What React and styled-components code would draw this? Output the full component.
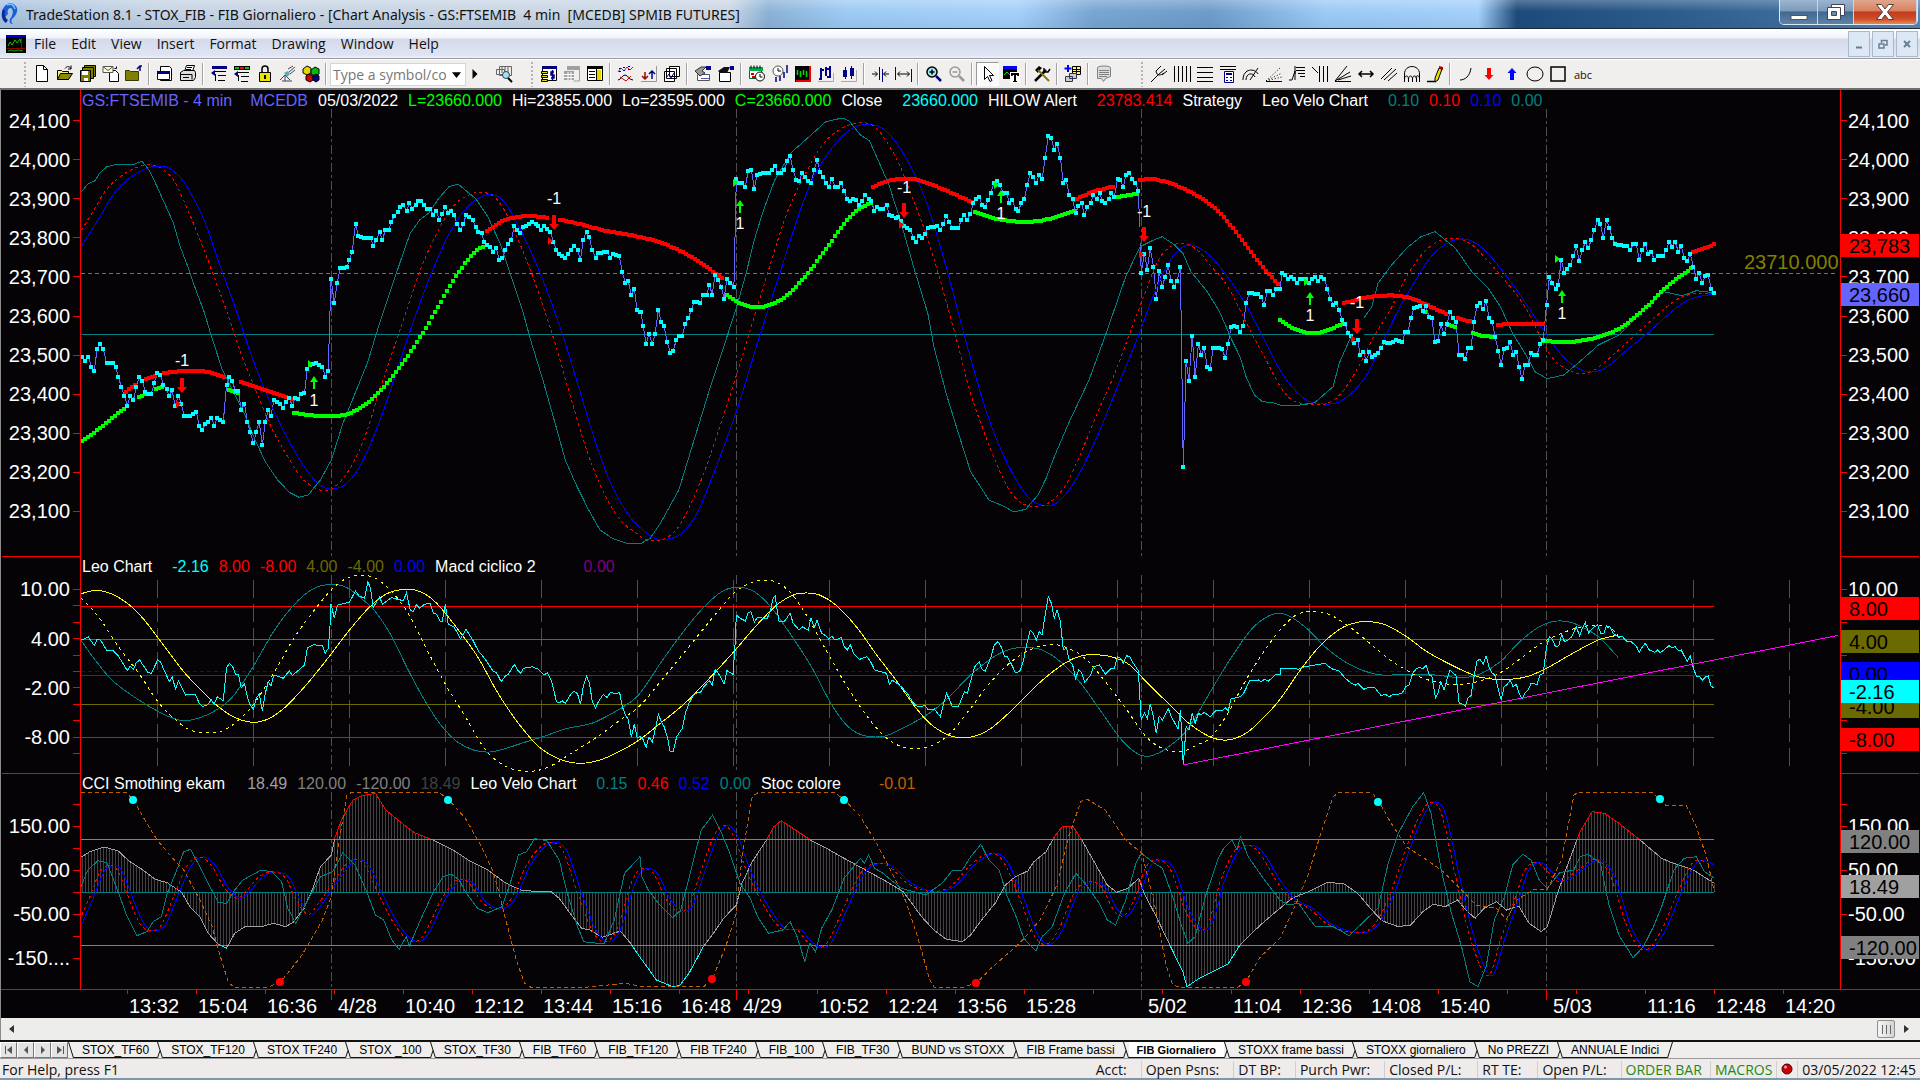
import React from "react";
import styled, { createGlobalStyle, css } from "styled-components";

const UI = '"Open Sans", "Noto Sans", sans-serif';
const ARIAL = '"Liberation Sans", Arial, sans-serif';

const GlobalStyle = createGlobalStyle`
  * { box-sizing: border-box; }
  html, body { margin: 0; padding: 0; background: #efebea; }
  button, input { font: inherit; color: inherit; margin: 0; padding: 0; border: 0; background: none; }
`;

const Page = styled.div`
  display: flex;
  flex-direction: column;
  min-height: 100vh;
  overflow: hidden;
  background: #efebea;
  font-family: ${UI};
  font-size: 14px;
  color: #111;
`;

/* ---------- title bar ---------- */

const TitleBar = styled.header`
  display: flex;
  align-items: flex-start;
  height: 29px;
  border-bottom: 1px solid #1b2a3c;
  background:
    linear-gradient(180deg, rgba(255,255,255,.25), rgba(255,255,255,0) 40%, rgba(20,50,90,.08)),
    linear-gradient(90deg, #aac3df 0%, #c6d4e4 8%, #ccd8e6 38%, #8db3d6 40%, #9ecbf4 44%, #a6d1fb 53%, #79a6d2 57%, #6f9ccb 63%, #9ccbf6 69%, #a4d0fa 77%, #1e4b7b 79%, #2b5a8a 86%, #3c6c9c 93%, #5a87b3 100%);
`;

const TitleText = styled.h1`
  flex: 1;
  margin: 0;
  padding: 5px 0 0 6px;
  font-family: "Noto Sans", "Open Sans", sans-serif;
  font-size: 14px;
  line-height: 20px;
  font-weight: 400;
  white-space: pre;
`;

const Logo = styled.svg`
  width: 20px;
  height: 26px;
`;

const WindowButtons = styled.div`
  display: flex;
  height: 25px;
  margin-right: 2px;
  border: 1px solid #dbe8f4;
  border-top: 0;
  border-radius: 0 0 5px 5px;
  overflow: hidden;
`;

const WindowButton = styled.button`
  display: grid;
  place-items: center;
  width: ${(p) => p.$w}px;
  border-right: 1px solid #c7d6e6;
  background: ${(p) =>
    p.$close
      ? "linear-gradient(#e0a58c 0, #d9815f 45%, #c03a1c 50%, #d0502c 80%, #e68b54)"
      : "linear-gradient(#9db5cf 0, #7d9bbb 45%, #41688f 50%, #5d83a8)"};
`;

/* ---------- menu bar ---------- */

const MenuBar = styled.nav`
  display: flex;
  align-items: center;
  height: 30px;
  padding: 0 2px 0 6px;
  border-bottom: 1px solid #9a9aa2;
  background: linear-gradient(#ffffff 0, #f2f4fa 30%, #d5dbeb 36%, #dfe4f4 90%, #f0f2f8);
`;

const MenuIcon = styled.svg`
  width: 20px;
  height: 18px;
`;

const MenuItem = styled.button`
  padding: 0 7px 0 8px;
  line-height: 28px;
  font-size: 14px;
`;

const MdiButtons = styled.div`
  display: flex;
  gap: 2px;
  margin-left: auto;
`;

const MdiButton = styled.button`
  display: grid;
  place-items: center;
  width: 22px;
  height: 26px;
  border: 1px solid #a9b9c9;
  background: #dce9f5;
`;

/* ---------- toolbar ---------- */

const ToolBar = styled.div`
  display: flex;
  align-items: center;
  height: 31px;
  padding-left: 24px;
  border-bottom: 2px solid #6f6f6f;
  border-top: 1px solid #fff;
  background: #f0efee;
`;

const Grip = styled.span`
  width: 2px;
  height: 25px;
  margin: 0 4px 0 ${(p) => p.$before || 0}px;
  background: repeating-linear-gradient(#b4b4b4 0 2px, transparent 2px 4px);
`;

const Divider = styled.span`
  width: 2px;
  height: 22px;
  margin: 0 3px;
  background: #a3a3a3;
  border-right: 1px solid #fff;
`;

const Tool = styled.button`
  display: grid;
  place-items: center;
  width: ${(p) => (p.$text ? 28 : 23)}px;
  height: 24px;
  font-family: ${UI};
  font-size: 11px;
  ${(p) =>
    p.$pressed &&
    css`
      background: #fbfbfb;
      border: 1px solid #9a9a9a;
      border-right-color: #fff;
      border-bottom-color: #fff;
    `}
`;

const Glyph = styled.svg`
  width: 18px;
  height: 18px;
  overflow: visible;
`;

const SymbolBox = styled.div`
  display: flex;
  align-items: center;
  width: 136px;
  height: 23px;
  border: 1px solid #d5d5d5;
  background: #fff;
`;

const SymbolInput = styled.input`
  flex: 1;
  min-width: 0;
  padding-left: 2px;
  font-size: 14px;
  outline: 0;
  &::placeholder { color: #777; opacity: 1; }
`;

const Arrow = styled.button`
  display: grid;
  place-items: center;
  width: ${(p) => p.$w}px;
  height: 22px;
  margin-right: ${(p) => p.$after || 0}px;
`;

/* ---------- chart ---------- */

const Chart = styled.main`
  display: flex;
  flex-direction: column;
  flex: 1;
  padding: 0 1px 0 1px;
  border-left: 1px solid #8b8b8b;
  background: #050306;
  font-family: ${ARIAL};
`;

const Pane = styled.section`
  position: relative;
  display: flex;
  flex: ${(p) => p.$grow} 0 0;
`;

const Axis = styled.div`
  display: flex;
  flex-direction: column;
  width: 79px;
  padding: ${(p) => p.$pad};
  color: #fff;
  font-size: 20px;
  border: 0 solid #f00;
  border-bottom-width: ${(p) => (p.$last ? 0 : 1)}px;
  ${(p) => (p.$right ? "border-left-width: 1px;" : "border-right-width: 1px;")}
`;

const Mark = styled.div`
  display: flex;
  flex: 1 0 0;
  min-height: 0;
  align-items: center;
  justify-content: flex-end;
  gap: ${(p) => (p.$right ? 1 : 3)}px;
  flex-direction: ${(p) => (p.$right ? "row-reverse" : "row")};
  line-height: 0;
  white-space: nowrap;
  &::after {
    content: "";
    width: ${(p) => (p.$right ? 6 : 7)}px;
    height: 1px;
    background: #f00;
  }
`;

const Badge = styled.div`
  position: absolute;
  right: 0;
  top: ${(p) => p.$top}px;
  width: 78px;
  height: 23px;
  padding-left: 8px;
  background: ${(p) => p.$bg};
  color: #000;
  font-size: 20px;
  line-height: 24px;
`;

const Plot = styled.div`
  position: relative;
  flex: 1;
  min-width: 0;
`;

const Canvas = styled.svg`
  display: block;
  position: absolute;
  inset: 0;
  width: 100%;
  height: 100%;
  font-family: ${ARIAL};
`;

const Legend = styled.div`
  position: relative;
  display: flex;
  gap: 10px;
  padding-left: 1px;
  font-size: 16px;
  line-height: ${(p) => (p.$tall ? 22 : 20)}px;
  white-space: nowrap;
`;

const Name = styled.span`
  color: #fff;
  margin-right: ${(p) => p.$after ?? 10}px;
`;

const Value = styled.span`
  color: ${(p) => p.$c};
  margin-right: ${(p) => p.$after || 0}px;
`;

const TimeAxis = styled.div`
  position: relative;
  display: grid;
  height: 29px;
  margin: 0 -1px;
  padding: 4px 0 0 128px;
  border-top: 1px solid #f00;
  background: #050306;
  color: #fff;
  font-size: 20px;
  line-height: 24px;
  white-space: nowrap;
`;

const TimeTicks = styled.svg`
  position: absolute;
  left: 0;
  top: 0;
  width: 100%;
  height: 11px;
`;

/* ---------- bottom bars ---------- */

const ScrollBar = styled.div`
  display: flex;
  align-items: center;
  height: 22px;
  padding: 0 3px;
  border-left: 1px solid #8b8b8b;
  background: #ededec;
`;

const Track = styled.div`
  flex: 1;
`;

const Thumb = styled.button`
  width: 18px;
  height: 18px;
  border: 1px solid #8e8e8e;
  border-radius: 2px;
  background:
    repeating-linear-gradient(90deg, #666 0 1px, transparent 1px 4px) center / 9px 9px no-repeat,
    linear-gradient(90deg, #f6f6f6, #d4d4d4);
`;

const TabBar = styled.div`
  display: flex;
  height: 19px;
  border-top: 2px solid #111;
  border-bottom: 1px solid #9a9a9a;
  background: #efeeed;
  font-family: ${ARIAL};
  font-size: 12px;
`;

const TabNav = styled.button`
  display: grid;
  place-items: center;
  width: 17px;
  height: 16px;
  border: 1px solid #fff;
  border-right-color: #777;
  border-bottom-color: #777;
  background: #e4e4e4;
`;

const Tab = styled.button`
  height: 16px;
  padding: 0 8px;
  border-bottom: 1px solid #111;
  background: ${(p) => (p.$on ? "#fff" : "#efeeed")};
  font-weight: ${(p) => (p.$on ? 700 : 400)};
  font-size: ${(p) => (p.$on ? 11 : 12)}px;
  line-height: 14px;
  white-space: pre;
  color: #000;
`;

const Slant = styled.svg`
  width: 6px;
  height: 16px;
  flex: none;
`;

const StatusBar = styled.footer`
  display: flex;
  align-items: center;
  height: 21px;
  padding: 2px 4px 0 2px;
  border-bottom: 2px solid #7d97ad;
  background: #efebea;
  font-size: 14px;
  line-height: 17px;
  white-space: nowrap;
`;

const Cell = styled.span`
  padding: 0 ${(p) => p.$r ?? 14}px 0 4px;
  border-left: 1px solid ${(p) => (p.$first ? "transparent" : "#d2cecd")};
  color: ${(p) => p.$c || "#111"};
`;

const Spacer = styled.span`
  flex: 1;
`;

/* ---------- icons ---------- */

const S = (p) => <path fill="none" stroke="#000" strokeWidth="1" {...p} />;
const F = (p) => <path fill="#000" {...p} />;
const note = "#808080";

const ICONS = {
  New: <><F fill="#fff" stroke="#000" d="M3.5.5h7l4 4v12h-11z" /><S d="M10.5.5v4h4" /></>,
  Open: <><F fill="#f4ef7a" stroke="#000" d="M1.5 5.5h4l1 1h6v8h-11z" /><F fill="#8a8a00" stroke="#000" d="M1.5 14.5l3-6h12l-4 6z" /><S d="M9 3.500c2-3 5-2 6 0m0-3v3.500h-3" /></>,
  "Save all": <><F fill="#808000" stroke="#000" d="M5.500.5h11v11h-11z" /><F fill="#808000" stroke="#000" d="M3.500 2.500h11v11h-11z" /><F fill="#808000" stroke="#000" d="M1.500 5.500h10v11h-10z" /><F fill="#fff" d="M3 6h6v4H3zM5 13h4v3H5z" /></>,
  Mail: <><F fill="#fff" stroke="#000" d="M7.500 5.500h6l3 3v8h-9z" /><F fill="#fffbd0" stroke="#555" d="M1 1.500h10v6H1z" /><S stroke="#555" d="M1 1.500l5 4 5-4" /><S d="M12.500 3.500h2v-2" /></>,
  "Close folder": <><F fill="#808000" stroke="#3a3a00" d="M.5 5.500h4l1 1h8v9H.5z" /><S stroke="#000080" strokeWidth="1.500" d="M15 6V1m-3 3l3-3h2" /></>,
  Window: <><F fill="#fff" stroke="#000" d="M4.500 1.500h9l2 2v12h-11z" /><F fill="#fff" stroke="#000080" d="M1.500 6.500h12v8h-12z" /><F fill="#000080" d="M1 6h13v3H1z" /></>,
  Print: <><F fill="#fff" stroke="#000" d="M5.500 6.500l2-6h8l-2 6z" /><F fill="#ddd" stroke="#000" d="M1.500 7.500l3-2h11l1 2v5l-2 3h-13z" /><S d="M1 9.500h12v5M4 12.500h6M8 2.500h5M7 4.500h5" /></>,
  Levels: <><F fill="#000080" d="M2 1h15v3H2z" /><S d="M5 6.500h11M8 10.500h8M8 15.500h7M5.500 9v7" /><F fill="#000080" d="M1 8l4-3v6z" /></>,
  "Color levels": <><F d="M1 1h16v4H1z" /><F fill="#0c0" d="M2 2h4v2H2zM12 2h4v2h-4z" /><F fill="#f00" d="M7 2h4v2H7z" /><S d="M5 7.500h11M8 11.500h8M8 16.500h7M5.500 10v6" /><F fill="#000080" d="M1 9l4-3v6z" /></>,
  Lock: <><S strokeWidth="1.500" d="M6 7V4c0-4 6-4 6 0v3" /><F fill="#e8e300" stroke="#000" d="M3.500 7.500h11v9h-11z" /><F d="M8 10h2v4H8z" /></>,
  Satellite: <><S stroke="#445" d="M1 15l5-5 5 5M6 10v6M9 4l5-3M10 7l6-5M11 9l5-4M3 16h10" /><F fill="#5ab" d="M5 8l4-2 2 3-3 3z" /></>,
  Cubes: <><F fill="#e5d800" stroke="#000" d="M1 4l4-3 4 2v5l-4 2-4-2z" /><F fill="#0b1" stroke="#000" d="M9 5l4-3 4 2v5l-4 2-4-2z" /><F fill="#c00" stroke="#000" d="M4 11l3-2 4 2v4l-3 2-4-2z" /><F fill="#008" stroke="#000" d="M11 11l3-2 3 2v4l-3 2-3-2z" /></>,
  Find: <><F fill="#eee" stroke="#666" d="M1.500 4.500h8v5h-8zM4.500 1.500h12v9h-12z" /><S stroke="#666" d="M7 2v6m3-6v6m3-6v6" /><circle cx="11" cy="10" r="3.500" fill="#9fe3ee" stroke="#345" /><S strokeWidth="2" d="M13 13l4 4" /></>,
  "Money sheet": <><F fill="#fff" stroke="#000" d="M2.500 2.500h14v13h-14z" /><F fill="#000080" d="M2 1h15v3H2z" /><F fill="#e5d800" stroke="#000" d="M1.500 6.500h6v2h-6zM1.500 10.500h6v2h-6zM1.500 14.500h6v2h-6z" /><S stroke="#000080" strokeWidth="1.500" d="M14 7h-3v3h3v3h-3m1.500-8v10" /></>,
  "Gray sheet": <><F fill="#a0a0a0" d="M4 1h13v4H4zM1 6h10v9H1z" /><S stroke="#fff" d="M5 7v8m3-8v8M1 9.500h10M1 12.500h10" /><S stroke="#a0a0a0" d="M16.500 5v11h-6" /></>,
  Sheet: <><F fill="#fff" stroke="#000" d="M1.500 2.500h15v13h-15z" /><F fill="#000" d="M1 1h16v3H1z" /><F fill="#e5d800" d="M11 5h4v10h-4z" /><S d="M3 6.500h6M3 9.500h6M3 12.500h6M10.500 4v12" /></>,
  Indicator: <><S stroke="#b22" d="M1 7l3-4 3 3 3-4 3 3 3-3" /><S stroke="#00a" strokeWidth="2" strokeDasharray="1 2" d="M3 3v5m4-6v4m5-5v5" /><S d="M1 15c3 0 4-5 7-5s4 5 8 5" /><S stroke="#c00" d="M3 12l6 4 5-5" /></>,
  "Sort arrows": <><S stroke="#900" strokeWidth="1.500" d="M5 7v7m-3-3l3 3 3-3" /><S stroke="#008" strokeWidth="1.500" d="M12 14V6m-3 3l3-3 3 3" /><S stroke="#999" d="M1 16.500h15.500V1" /></>,
  Layers: <><F fill="#fff" stroke="#000" d="M6.500 1.500h10v10h-10zM3.500 3.500h10v10h-10zM1.500 6.500h10v10h-10z" /><S stroke="#008" d="M3 13l3-4 2 4 3-5" /></>,
  "Format hand": <><F fill="#fff" stroke="#555" d="M3.500 9.500h12v6h-12z" /><F fill="#999" stroke="#333" d="M1 6l6-4h5l-4 4 3 2-5 3z" /><F fill="#008" d="M12 1h5v4h-5z" /><S stroke="#55a" d="M7 13.500h8" /></>,
  "Format hand dark": <><F fill="#fff" stroke="#000" d="M2.500 7.500h11v9h-11z" /><F fill="#111" d="M1 6l6-4h6l-3 6H3z" /><F fill="#008" d="M13 1h4v4h-4z" /></>,
  "Session calendar": <><F fill="#fff" stroke="#063" d="M1.500 3.500h12v10h-12z" /><F fill="#0a4" d="M1 2h14v4H1z" /><S d="M3 .5v3m3-3v3m3-3v3m3-3v3" /><F fill="#c00" d="M3 8h3v2H3zM4 11h3v2H4z" /><circle cx="12" cy="11.500" r="4.500" fill="#fff" stroke="#000" /><S d="M12 9v3h2.500" /></>,
  "Bar interval": <><circle cx="7" cy="6" r="5" fill="#fff" stroke="#555" /><S d="M7 3v3h3" /><S stroke="#008" strokeWidth="1.500" d="M5 12v5m4-6v5m4-9v6m3-13v8" /></>,
  "Bar chart": <><F fill="#000" d="M1 1h16v16H1z" /><S stroke="#e00" strokeWidth="2" d="M16 1v15H2" /><S stroke="#0d0" strokeWidth="1.500" d="M3.500 5v5m3-4v6m3-7v5m3-4v6" /></>,
  "OHLC bars": <><S stroke="#008" strokeWidth="2" d="M4 3v12M2 14h2m0-9h3M9 2v9m0-7h3m1-3v12m-3-1h3" /><S stroke="#aaa" d="M1 16.500h15.500V8" /></>,
  Candles: <><S stroke="#008" d="M5.500 2v12M11.500 1v13" /><F fill="#008" d="M3 5h4v7H3zM10 3h4v8h-4z" /><S stroke="#aaa" d="M1 16.500h15.500V5" /></>,
  "Tighten bars": <><S stroke="#008" d="M8.500 2v13M11.500 4v13" /><S d="M1 9h5m-2-2.500L6.500 9 4 11.500M18 9h-5m2-2.500L12.500 9l2.500 2.500" /></>,
  "Widen bars": <><S stroke="#008" d="M1.500 2v13M17.500 4v13" /><S d="M4 9h11M6 6.500L3.500 9 6 11.500M13 6.500L15.500 9 13 11.500" /></>,
  "Zoom in": <><circle cx="7" cy="7" r="5" fill="#9fe9f2" stroke="#000" strokeWidth="1.500" /><S strokeWidth="1.500" d="M4.500 7h5M7 4.500v5" /><S stroke="#008" strokeWidth="2.500" d="M11 11l5 5" /></>,
  "Zoom out": <><circle cx="7" cy="7" r="5" fill="none" stroke="#999" strokeWidth="1.500" /><S stroke="#999" strokeWidth="1.500" d="M4.500 7h5" /><S stroke="#999" strokeWidth="2.500" d="M11 11l5 5" /></>,
  Pointer: <F fill="#fff" stroke="#000" d="M5.500 1.500v13l3-3 2.500 5 2-1-2.500-5h4z" />,
  "Text tool": <><F fill="#000" d="M1 1h14v13H1z" /><F fill="#00f" d="M1 1h14v3H1z" /><S stroke="#0d0" d="M2 10l3-3 3 3 3-2" /><F fill="#fff" d="M8 7h10v11H8z" /><F d="M9 8h8v3h-1.500l-.5-1h-1v6h1v1h-4v-1h1v-6h-1l-.5 1H9z" /></>,
  Tools: <><S strokeWidth="2.500" d="M2 16L13 5" /><F d="M2 5l4-4 3 2-3 3-1 2z" /><S stroke="#870" strokeWidth="2" d="M5 5l11 11" /><S stroke="#000" strokeWidth="1.500" d="M11 3v4h4l2-3" /></>,
  "Add table": <><S stroke="#00f" strokeWidth="2" d="M4 0v7M.5 3.500h7" /><F fill="#ffef80" stroke="#000" d="M8.500 1.500h8v8h-8z" /><S d="M9 4.500h7M9 6.500h7M12.500 2v7" /><F fill="#ccc" stroke="#335" d="M5.500 8.500h7v5h-7zM1.500 11.500h7v5h-7z" /></>,
  Notes: <><F fill="#ddd" stroke={note} d="M2.500 2.500c2-2 11-2 13 0v9l-5 2-2 3-2-3h-4z" /><S stroke={note} d="M4 5.500h10M4 7.500h10M4 9.500h10M4 11.500h8" /></>,
  Pitchfork: <S d="M1 17l8-8M6 6c1 6 5 4 8 2M6 6l5-5M9 9l6-5M12 10l5-4" />,
  "Vertical lines": <S d="M1.500 1v16M5.500 1v16M9.500 1v16M13.500 1v16M17.500 1v16" />,
  "Horizontal lines": <S d="M1 2.500h16M1 7.500h16M1 12.500h16M1 16.500h16" />,
  Calculator: <><S d="M1 1.500h16M1 4.500h16" /><F fill="#fff" stroke="#008" d="M5.500 6.500h9v11h-9z" /><F fill="#008" d="M7 8h6v2H7zM7 12h2v1H7zM11 12h2v1h-2zM7 15h2v1H7zM11 15h2v1h-2z" /></>,
  "Speed arcs": <S d="M1 15c0-12 12-12 15-6M4 15c0-7 7-8 9-3M8 15L16 3" />,
  "Dotted fan": <><S strokeDasharray="1 2" d="M1 16L16 2M1 16L17 8M1 16L17 12" /><S d="M1 16.500h16" /></>,
  "Step levels": <S d="M1 15h3l3-9v9M8 2.500h9M8 5.500h9M10 8.500h7M12 11.500h5M7 1v8" />,
  "Time lines": <S d="M1 2l6 6M8.500 1v16M12.500 1v16M16.500 1v16" />,
  Fan: <S d="M1 16.500h16M1 16L13 1M1 16l15-9M4 15l13-4" />,
  "Horizontal arrow": <S strokeWidth="1.500" d="M2 9h14M5 6L2 9l3 3M13 6l3 3-3 3" />,
  Channel: <S d="M1 14L12 3M4 15L16 4M8 16l9-8" />,
  Cycles: <S d="M1.500 17V9c0-10 15-10 15 0v8M1.500 14c0-4 4-4 4 0v3M5.500 14c0-4 4-4 4 0v3M9.500 14c0-4 4-4 4 0v3M13 13c0-3 3-3 3.500 0" />,
  Pencil: <><S strokeWidth="1.500" d="M1 16.500h9" /><F fill="#e8e300" stroke="#000" d="M9 13l4-10 3 1-4 11-3 2z" /><F fill="#a00" d="M13 1l4 1v3l-4-1z" /></>,
  Arc: <S d="M3 15c5 0 10-4 11-12" />,
  "Red arrow": <F fill="#f00" d="M7 3h4v7h2.500L9 15 4.500 10H7z" />,
  "Blue arrow": <F fill="#00f" d="M7 15h4V8h2.500L9 3 4.500 8H7z" />,
  Ellipse: <ellipse cx="9" cy="9" rx="8" ry="7" fill="none" stroke="#000" />,
  Rectangle: <S strokeWidth="1.500" d="M2 2h14v14H2z" />,
};

const TOOL_GROUPS = [
  ["New", "Open", "Save all", "Mail", "Close folder", "|", "Window", "Print", "|", "Levels", "Color levels", "Lock", "Satellite", "Cubes", "|"],
  ["Money sheet", "Gray sheet", "Sheet", "|", "Indicator", "Sort arrows", "Layers", "|", "Format hand", "Format hand dark", "|", "Session calendar", "Bar interval", "Bar chart", "OHLC bars", "Candles", "|", "Tighten bars", "Widen bars", "|", "Zoom in", "Zoom out", "|", "Pointer", "Text tool", "|", "Tools", "|", "Add table", "|", "Notes"],
  ["Pitchfork", "Vertical lines", "Horizontal lines", "Calculator", "Speed arcs", "Dotted fan", "Step levels", "Time lines", "Fan", "Horizontal arrow", "Channel", "Cycles", "Pencil", "|", "Arc", "Red arrow", "Blue arrow", "Ellipse", "Rectangle"],
];

function Tools({ items }) {
  return items.map((name, i) =>
    name === "|" ? (
      <Divider key={i} />
    ) : (
      <Tool key={i} aria-label={name} $pressed={name === "Pointer"}>
        <Glyph viewBox="0 0 18 18">{ICONS[name]}</Glyph>
      </Tool>
    )
  );
}

const Tri = ({ d, c = "#000", w = 8, h = 8 }) => (
  <svg width={w} height={h} viewBox="0 0 8 8"><path d={d} fill={c} /></svg>
);

/* ---------- series data ----------
   Each series is stored in three blocks of 640px; inside a block x runs
   at 2.45 units per pixel and y at 3 units per pixel. "|" lifts the pen. */

const toPoints = (top, blocks) => {
  const lines = [[]];
  blocks.forEach((text, b) => {
    const t = text.trim().split(/[\s,]+/).filter(Boolean);
    for (let i = 0; i < t.length; ) {
      if (t[i] === "|") {
        lines.push([]);
        i += 1;
      } else {
        lines[lines.length - 1].push([b * 640 + t[i] / 2.45, top + t[i + 1] / 3]);
        i += 2;
      }
    }
  });
  return lines.filter((l) => l.length > 1);
};

const straight = (lines) =>
  lines.map((l) => "M" + l.map(([x, y]) => x.toFixed(1) + " " + y.toFixed(1)).join("L")).join("");

const smooth = (lines) =>
  lines
    .map((l) => {
      let d = `M${l[0][0].toFixed(1)} ${l[0][1].toFixed(1)}`;
      for (let i = 0; i < l.length - 1; i++) {
        const a = l[Math.max(0, i - 1)], b = l[i], c = l[i + 1], e = l[Math.min(l.length - 1, i + 2)];
        const h = (c[0] - b[0]) / 3;
        const s1 = c[0] - a[0] ? (c[1] - a[1]) / (c[0] - a[0]) : 0;
        const s2 = e[0] - b[0] ? (e[1] - b[1]) / (e[0] - b[0]) : 0;
        d += `C${(b[0] + h).toFixed(1)} ${(b[1] + h * s1).toFixed(1)} ${(c[0] - h).toFixed(1)} ${(c[1] - h * s2).toFixed(1)} ${c[0].toFixed(1)} ${c[1].toFixed(1)}`;
      }
      return d;
    })
    .join("");

/* One square per bar, every 3px, along a Hermite curve through the points. */
const squares = (lines) =>
  lines
    .map((l) => {
      const slope = l.map((_, i) => {
        const a = l[Math.max(0, i - 1)], b = l[Math.min(l.length - 1, i + 1)];
        return (b[1] - a[1]) / (b[0] - a[0] || 1);
      });
      let d = "";
      let i = 0;
      for (let x = l[0][0]; x <= l[l.length - 1][0]; x += 3) {
        while (i < l.length - 2 && l[i + 1][0] < x) i++;
        const w = l[i + 1][0] - l[i][0];
        const t = (x - l[i][0]) / w;
        const y =
          (2 * t ** 3 - 3 * t ** 2 + 1) * l[i][1] +
          (t ** 3 - 2 * t ** 2 + t) * w * slope[i] +
          (-2 * t ** 3 + 3 * t ** 2) * l[i + 1][1] +
          (t ** 3 - t ** 2) * w * slope[i + 1];
        d += `M${Math.round(x) - 2} ${Math.round(y) - 2}h4v4h-4z`;
      }
      return d;
    })
    .join("");

const MAIN = 90;
const LOW = 550;

const price = toPoints(MAIN, [
  "202 800 209 813 216 800 224 830 231 843 238 777 246 761 253 777 261 818 276 818 283 830 290 860 297 890 305 917 312 948 319 917 327 930 334 890 341 860 349 873 356 905 363 911 371 911 378 878 385 848 393 854 400 885 408 898 415 917 422 901 429 947 437 917 444 941 451 978 466 978 481 966 488 1007 496 1020 503 1001 510 996 518 983 525 1008 532 983 547 995 555 885 562 860 569 873 577 903 584 903 591 960 599 941 606 995 613 1026 621 1058 628 1025 635 995 643 1065 650 995 657 960 664 978 671 929 679 935 686 941 694 954 701 935 709 923 716 948 723 923 730 926 738 911 746 909 753 836 760 824 775 818 790 830 797 861 804 842 811 567 819 638 826 579 834 535 850 530 856 510 863 485 871 402 878 437 893 443 908 443 915 468 922 449 930 426 937 450 944 420 952 420 959 396 966 377 974 366 981 350 988 345 996 363 1003 339 1010 356 1018 345 1025 332 1032 332 1040 345 1047 356 1054 358 1062 376 1069 362 1076 390 1084 373 1091 350 1098 368 1106 362 1113 376 1120 402 1128 420 1135 402 1142 375 1150 381 1158 389 1165 412 1172 425 1180 430 1187 457 1201 470 1209 486 1216 473 1223 510 1231 505 1238 480 1245 461 1253 449 1260 408 1267 420 1275 430 1282 412 1297 402 1304 396 1312 402 1319 408 1326 420 1333 408 1341 418 1348 425 1356 455 1363 480 1370 491 1385 503 1392 491 1400 480 1407 468 1415 480 1422 510 1429 449 1437 425 1444 442 1451 480 1459 503 1466 490 1488 486 1495 503 1502 492 1517 497 1525 547 1532 579 1539 573 1547 614 1554 597 1561 660 1568 665",
  "2 665 8 708 15 762 22 732 30 762 37 732 45 659 52 695 59 708 67 756 74 788 81 784 89 750 96 738 104 738 111 702 118 684 126 660 133 635 148 638 155 614 163 614 170 585 177 614 184 554 192 570 199 590 206 626 213 567 221 578 230 590 236 267 243 279 250 279 258 291 265 243 273 240 280 296 287 255 302 249 316 248 324 240 331 227 338 250 346 250 353 240 361 214 368 198 375 240 383 270 390 274 397 248 405 260 412 274 419 279 427 240 434 209 441 245 449 260 456 280 463 291 470 266 478 291 486 290 493 278 500 303 508 328 515 332 523 328 530 330 537 344 545 332 552 314 560 328 567 334 574 362 581 351 589 356 596 356 604 344 611 374 618 378 626 384 633 380 640 392 648 408 655 414 662 420 670 444 677 456 684 437 691 444 698 432 706 413 721 410 728 408 736 420 743 403 750 377 758 396 765 413 780 413 787 391 794 376 802 390 809 373 817 340 824 326 831 320 838 344 846 350 853 330 860 308 867 278 875 272 882 285 889 308 898 308 905 340 912 330 920 356 927 362 934 340 942 327 949 285 956 248 963 262 971 279 978 255 985 268 993 203 1000 137 1008 145 1015 181 1022 161 1030 203 1037 278 1044 270 1052 314 1060 328 1067 370 1074 348 1082 339 1089 375 1096 351 1104 338 1111 315 1119 326 1126 308 1133 332 1140 339 1148 326 1155 308 1162 322 1170 268 1177 270 1184 290 1191 254 1199 248 1206 266 1213 278 1221 302 1224 410 | 1226 460 1228 548 1236 491 1243 539 1250 474 1258 531 1265 626 1272 543 1279 590 1287 560 1294 525 1301 572 1309 590 1316 572 1324 530 1331 1131 1338 812 1345 872 1353 738 1360 860 1368 762 1375 795 1382 774 1390 830 1397 838 1404 774 1426 776 1434 805 1441 762 1448 712 1456 708 1463 712 1470 726 1478 708 1485 640 1493 608 1515 612 1522 620 1529 645 1537 603 1544 604 1552 614 1559 597 1568 597",
  "5 548 12 556 20 567 27 560 34 567 42 578 50 567 64 567 72 580 79 567 86 561 94 573 101 561 109 567 116 597 123 627 131 645 138 640 145 660 153 690 160 703 167 730 175 738 182 760 190 750 197 795 204 785 211 813 219 785 226 800 240 790 248 775 256 757 270 760 285 750 300 756 306 726 313 726 321 684 328 655 335 650 343 648 350 662 357 648 365 680 372 684 380 756 387 752 394 702 402 732 409 702 417 665 424 684 431 696 439 795 446 795 454 807 461 774 468 774 475 695 483 648 490 640 498 657 505 632 512 684 520 696 527 740 535 783 542 824 549 776 557 774 564 756 571 795 579 785 586 830 593 868 601 824 608 824 615 790 623 795 630 795 637 762 645 750 653 645 660 560 667 578 675 597 682 585 689 510 697 548 704 537 711 525 719 498 726 468 733 513 741 480 748 456 755 474 763 450 770 420 778 390 785 402 792 443 800 390 807 413 814 443 821 461 836 466 851 467 858 480 866 461 873 461 880 510 888 480 895 461 902 491 910 486 917 510 925 497 939 497 946 480 954 455 961 470 968 455 976 485 983 468 990 503 998 514 1005 491 1013 531 1020 567 1027 548 1034 579 1042 558 1049 556 1057 597 1064 609",
]);

const bars = price.flatMap((line) =>
  line.flatMap((p, i) => {
    const n = line[i + 1] ? Math.max(1, Math.round((line[i + 1][0] - p[0]) / 3)) : 1;
    return Array.from({ length: n }, (_, k) =>
      k ? [p[0] + ((line[i + 1][0] - p[0]) * k) / n, p[1] + ((line[i + 1][1] - p[1]) * k) / n] : p
    );
  })
).filter(([x, y]) => !(x > 1139 && x < 1141.1 && y > 200));

const hiLow = {
  red: toPoints(MAIN, [
    "308 905 320 893 334 882 | 358 868 382 858 | 403 849 430 845 460 842 490 843 520 849 555 864 | 590 876 640 896 680 914 717 928 | 1192 424 1210 408 1240 388 1270 381 1300 378 1342 384 | 1372 389 1420 402 1480 421 1568 441",
    "60 462 110 490 160 528 208 572 | 572 292 600 276 630 268 670 267 700 277 740 296 815 336 | 1064 330 1110 306 1166 288 | 1226 270 1260 268 1300 280 1340 300 1380 328 1420 366 1460 425 1500 490 1530 535 1568 588",
    "| 157 640 200 625 250 617 300 619 340 634 380 656 412 674 | 436 685 474 697 | 533 706 560 701 648 702 | 1012 487 1066 462",
  ]),
  green: toPoints(MAIN, [
    "200 1053 240 1018 280 978 308 952 | 340 922 357 912 | 383 898 403 888 | 560 900 585 911 | 720 968 750 974 780 978 820 978 855 970 890 948 930 905 980 830 1035 730 1080 635 1120 553 1160 490 1190 464",
    "| 212 615 240 638 285 652 320 644 360 615 410 550 450 485 500 400 530 362 565 338 | 820 365 860 382 900 392 940 396 990 390 1030 376 1065 362 | 1166 321 1224 311",
    "| 0 690 30 714 80 730 120 718 158 700 | 355 665 362 680 | 415 704 433 712 | 472 729 500 738 530 741 | 648 752 690 757 740 752 780 742 820 724 860 692 900 650 940 600 980 560 1012 532",
  ]),
};

const velo = toPoints(MAIN, [
  "200 305 215 282 233 272 245 248 262 230 290 222 330 222 348 214 365 240 385 290 405 345 425 400 440 465 460 530 480 600 500 665 517 735 545 840 570 900 600 975 625 1050 650 1115 680 1170 710 1208 733 1222 755 1215 785 1170 812 1110 840 1000 870 910 900 820 930 700 960 590 985 500 1005 430 1028 390 1050 370 1075 325 1100 290 1122 282 1145 305 1165 325 1195 380 1225 460 1250 550 1280 660 1300 750 1330 870 1360 1000 1385 1110 1410 1180 1440 1255 1470 1320 1500 1345 1535 1360 1568 1362",
  "25 1345 50 1300 95 1200 130 1060 170 900 200 790 237 650 260 550 280 450 300 370 330 270 370 188 410 145 455 95 495 84 512 92 540 135 562 152 585 215 610 285 640 400 670 530 705 670 720 770 750 910 780 1030 810 1145 855 1230 890 1248 915 1266 945 1258 975 1215 995 1165 1015 1100 1050 1000 1100 870 1145 720 1190 560 1225 470 1262 448 1280 440 1310 465 1330 490 1350 545 1390 605 1420 665 1450 750 1470 800 1485 860 1505 915 1525 935 1550 938 1568 945",
  "35 948 85 938 130 890 145 820 172 745 | 205 685 225 650 240 580 270 530 310 475 345 440 380 425 400 445 430 475 470 545 510 595 540 650 570 730 600 790 625 845 655 866 695 855 730 820 780 765 830 735 860 700 890 660 940 605 985 617 1020 602 1064 608",
]);

const veloRed = toPoints(MAIN, [
  "200 420 230 360 260 300 300 255 340 230 365 224 395 235 425 270 460 360 490 450 520 545 560 680 590 790 630 910 660 1000 700 1090 740 1165 785 1200 820 1190 860 1130 900 1020 930 900 980 720 1030 540 1070 430 1110 350 1140 320 1175 307 1210 320 1240 370 1280 480 1320 610 1360 760 1400 930 1440 1090 1480 1210 1520 1290 1568 1338",
  "10 1348 40 1352 70 1340 100 1300 150 1170 190 1030 230 880 280 680 320 520 360 370 410 240 450 160 490 118 530 100 565 103 590 130 630 210 660 300 700 430 740 590 780 770 810 910 860 1080 900 1190 930 1235 965 1249 1000 1240 1040 1190 1080 1090 1120 970 1160 860 1200 730 1240 600 1270 510 1300 470 1330 460 1365 480 1400 530 1440 590 1490 710 1530 800 1568 888",
  "30 930 75 943 115 940 150 910 190 835 230 740 270 660 310 560 350 490 390 453 430 445 465 460 500 500 550 570 600 650 650 770 680 820 730 850 770 840 820 790 870 735 920 680 970 630 1010 612 1064 610",
]);

const veloBlue = toPoints(MAIN, [
  "200 467 240 390 280 310 320 262 360 235 390 228 415 235 450 275 500 390 540 530 580 665 620 810 670 960 720 1080 760 1155 790 1190 815 1197 850 1180 890 1110 940 960 1000 740 1060 540 1110 410 1150 345 1180 320 1205 313 1235 335 1280 430 1330 570 1380 740 1420 900 1460 1060 1500 1190 1540 1275 1568 1312",
  "35 1345 65 1348 100 1332 140 1270 190 1120 240 950 290 750 340 560 390 370 430 250 480 160 520 115 560 103 600 120 650 200 700 330 750 530 800 760 850 970 900 1120 950 1220 990 1247 1025 1235 1070 1165 1120 1040 1170 890 1220 740 1260 610 1290 530 1320 480 1350 465 1390 490 1430 545 1480 635 1530 750 1568 840",
  "40 905 75 936 135 940 170 915 210 860 250 760 290 660 330 575 370 500 410 460 450 447 490 468 530 520 580 600 640 710 690 795 730 835 765 846 800 832 850 780 900 730 950 675 1000 630 1064 611",
]);

const leo = toPoints(LOW, [
  "198 270 209 266 216 260 231 287 238 268 246 270 261 300 276 300 290 318 312 362 319 348 327 358 334 338 342 330 349 343 363 368 371 370 386 330 393 335 400 355 415 395 422 380 430 417 437 393 455 435 478 432 488 460 496 470 508 465 518 450 525 463 532 440 547 452 555 353 562 341 570 350 577 373 584 373 591 413 599 402 606 440 613 465 621 478 628 445 635 432 643 483 650 430 657 395 664 408 671 375 694 385 709 362 716 377 730 362 746 345 753 294 768 284 790 287 797 310 804 295 808 240 811 163 819 203 827 165 856 157 871 123 880 138 893 145 901 95 908 115 914 173 930 140 937 163 959 143 981 150 988 152 996 128 1005 180 1012 185 1020 165 1028 175 1040 163 1054 160 1062 190 1069 192 1078 213 1084 213 1091 163 1098 222 1113 232 1128 266 1142 238 1158 270 1172 303 1187 325 1209 365 1216 367 1228 395 1238 378 1246 372 1260 343 1268 360 1275 370 1283 355 1304 350 1319 358 1333 375 1341 368 1350 390 1356 415 1363 455 1370 458 1378 453 1385 460 1400 430 1407 424 1415 432 1422 463 1429 410 1437 378 1444 400 1451 453 1459 473 1466 455 1478 433 1488 443 1495 427 1510 432 1518 427 1525 470 1532 495 1539 508 1547 560 1554 522 1561 563 1568 560",
  "8 570 15 592 22 560 30 577 37 540 45 493 52 515 59 530 67 560 74 605 81 605 90 560 104 535 111 490 120 460 133 430 148 428 155 412 170 392 177 405 184 358 192 370 206 402 213 362 228 373 233 280 236 195 243 203 258 213 265 188 272 185 280 216 287 203 312 205 320 180 326 145 331 137 336 180 341 215 353 215 368 190 375 220 390 240 397 230 412 240 419 205 427 232 434 210 445 250 456 258 463 268 470 258 478 270 493 263 500 290 508 300 515 283 523 310 538 328 556 320 565 335 575 360 604 370 611 403 618 390 626 397 640 410 655 430 670 460 680 470 699 467 706 480 721 477 736 500 743 465 751 430 758 448 765 470 780 470 795 425 802 430 812 385 820 350 831 335 838 358 846 363 860 320 868 285 877 275 885 290 893 320 900 320 910 343 920 368 930 365 940 330 949 275 956 240 963 250 971 270 978 245 985 255 993 193 1000 140 1008 160 1015 205 1022 180 1030 215 1037 300 1045 293 1052 333 1060 345 1067 385 1075 360 1082 368 1090 397 1104 375 1111 350 1126 345 1140 373 1155 355 1162 355 1170 320 1177 325 1184 340 1192 317 1200 320 1206 335 1221 362 1224 430 1228 510 1236 488 1243 505 1250 463 1258 500 1265 550 1272 498 1280 510 1294 475 1302 500 1318 537 1324 480 1331 645 1338 530 1345 540 1353 490 1360 520 1368 490 1375 495 1382 487 1397 500 1412 480 1426 482 1434 473 1441 483 1448 447 1470 440 1478 432 1485 415 1493 393 1515 390 1522 395 1530 388 1540 393 1559 372 1568 372",
  "0 357 30 355 45 358 60 350 100 342 110 340 120 350 130 358 145 363 160 385 175 400 185 405 190 400 205 418 215 413 232 412 240 425 248 437 258 433 268 440 278 433 290 433 300 428 308 410 316 405 325 370 335 355 343 352 350 357 358 345 366 375 372 378 381 445 387 430 394 395 402 420 410 385 417 360 424 370 431 375 439 460 447 462 454 468 461 443 468 437 476 375 483 332 490 328 498 343 505 318 512 350 520 370 527 375 535 420 542 450 549 410 557 403 564 390 571 410 579 403 586 430 593 448 600 430 608 420 615 400 630 403 637 375 645 370 653 290 660 260 667 268 675 290 683 287 690 253 697 275 705 270 715 260 726 230 734 258 741 235 748 217 756 250 763 238 770 230 778 225 786 250 793 252 800 228 808 230 816 250 830 262 838 258 850 275 860 275 873 288 880 307 888 290 895 280 905 300 918 307 925 300 932 308 940 300 953 287 960 293 968 290 976 302 983 300 998 335 1005 318 1013 355 1020 378 1028 380 1035 390 1043 380 1049 378 1056 408 1064 415",
]);

const yellow = toPoints(LOW, [
  "198 131 235 121 270 130 310 158 350 205 400 285 450 365 500 430 540 475 580 505 622 517 660 505 700 470 750 405 800 330 850 250 900 178 945 133 990 118 1030 125 1070 160 1120 235 1170 320 1220 430 1270 520 1320 590 1370 627 1420 640 1470 630 1520 603 1568 568",
  "50 520 110 460 170 385 230 305 290 220 340 160 380 133 410 129 440 135 480 165 530 230 580 315 630 395 680 480 720 530 768 560 815 560 860 535 920 470 980 397 1040 340 1080 318 1115 314 1160 322 1200 345 1240 395 1290 455 1340 515 1380 550 1415 568 1450 568 1490 545 1530 500 1568 448",
  "50 360 100 285 150 235 190 217 220 215 260 225 310 260 360 305 420 345 480 378 520 387 565 388 610 378 660 350 720 308 780 270 828 255",
]);

const yellowDash = toPoints(LOW, [
  "198 143 220 170 250 215 290 290 340 370 390 460 440 520 470 542 505 548 540 545 580 515 620 465 670 370 720 265 780 165 820 110 850 85 885 76 920 85 960 125 1000 190 1040 285 1090 400 1140 500 1190 600 1240 650 1290 664 1340 653 1400 610 1460 563 1520 510 1568 467",
  "60 380 120 290 180 200 230 130 265 102 300 91 335 97 370 130 410 200 460 310 510 415 560 505 600 560 640 590 675 596 715 587 760 550 810 475 860 395 920 325 970 292 1005 284 1040 290 1090 325 1140 395 1190 475 1240 560 1280 595 1325 605 1365 585 1400 560 1440 490 1480 400 1520 320 1568 240",
  "40 195 80 184 120 193 170 230 220 280 270 330 310 360 340 380 390 398 440 404 490 393 540 368 590 325 640 280 690 250 740 230 780 227 810 235 828 255",
]);

const tealWave = toPoints(LOW, [
  "198 270 230 325 270 385 310 425 360 465 410 498 450 512 490 503 530 480 570 440 620 350 670 245 720 165 765 118 810 103 850 113 890 150 920 185 960 260 1000 360 1040 450 1080 525 1120 575 1160 600 1200 606 1240 595 1290 575 1330 560 1390 535 1450 520 1500 490 1540 460 1568 430",
  "50 340 100 255 150 180 200 125 240 112 280 125 320 170 370 255 420 350 470 465 510 530 550 557 600 558 650 530 700 497 750 450 810 375 870 318 910 297 945 292 985 300 1030 335 1080 400 1130 485 1180 570 1220 612 1250 618 1290 595 1340 540 1400 420 1450 320 1500 235 1540 198 1568 190",
  "30 203 70 240 110 290 150 328 200 360 250 375 320 372 380 375 450 383 490 372 540 335 590 272 640 227 680 213 720 220 780 260 828 322",
]);

const cci = toPoints(LOW, [
  "198 922 220 905 255 891 290 903 315 932 350 960 380 988 410 998 445 1027 465 1070 490 1100 510 1150 535 1183 555 1195 575 1150 600 1130 640 1130 670 1120 700 1130 720 1115 745 1075 765 1020 785 950 812 915 820 865 835 815 850 780 865 750 885 738 920 730 945 780 980 815 1015 848 1060 870 1110 900 1150 932 1195 960 1240 1000 1280 1022 1350 1025 1370 1045 1400 1095 1425 1135 1445 1140 1475 1162 1520 1143 1545 1180 1568 1222",
  "20 1255 40 1290 80 1310 97 1307 120 1270 155 1190 180 1150 205 1105 236 1065 250 1000 275 935 310 870 328 830 346 812 375 835 420 872 450 890 500 925 560 965 600 992 645 1025 690 1100 720 1140 750 1168 790 1175 810 1155 840 1105 870 1060 895 1005 920 980 950 963 965 935 995 905 1015 860 1035 830 1060 828 1085 875 1110 930 1145 1005 1168 1027 1195 1015 1222 985 1235 1030 1265 1100 1300 1190 1330 1265 1340 1310 1370 1285 1440 1243 1470 1185 1520 1125 1568 1075",
  "30 1045 70 1025 115 998 155 1000 190 1030 225 1080 250 1112 290 1130 320 1125 350 1085 375 1063 405 1070 435 1050 455 1080 478 1105 500 1075 530 1055 555 1080 585 1068 610 1120 640 1145 655 1130 680 1030 700 960 735 845 765 785 795 790 830 820 880 868 935 925 960 938 1010 958 1064 1000",
]);

const veloFast = toPoints(LOW, [
  "198 1012 215 960 240 932 262 938 285 1010 310 1095 335 1157 360 1145 375 1115 395 1100 410 1030 430 970 450 905 467 898 485 940 510 1000 535 1058 555 1060 575 1020 595 990 625 970 640 960 665 965 690 995 705 1075 725 1120 750 1060 785 980 815 965 840 908 870 945 900 1030 920 1095 940 1110 960 1170 978 1198 995 1160 1003 1188 1030 1110 1060 1030 1085 980 1105 972 1125 990 1140 1025 1170 1075 1195 1088 1230 1070 1250 1000 1270 915 1290 905 1310 866 1340 872 1370 930 1390 1030 1415 1130 1430 1175 1480 1182 1505 1110 1530 970 1568 920",
  "5 980 20 1020 45 1060 80 1103 100 1080 125 960 150 840 178 795 200 850 220 910 245 1000 270 1045 290 1105 315 1150 350 1140 368 1115 385 1160 404 1235 415 1180 430 1205 445 1135 470 1080 500 985 540 925 550 940 560 915 575 955 595 970 640 1015 700 1035 740 1000 765 962 790 960 810 920 835 883 855 930 880 960 900 1040 920 1095 940 1165 970 1203 985 1160 1010 1130 1040 1030 1068 970 1090 1000 1125 1060 1145 1110 1165 1125 1190 1050 1215 940 1228 910 1255 935 1280 955 1305 1040 1325 1120 1342 1180 1360 1160 1385 1040 1415 930 1430 895 1450 870 1463 900 1471 860 1490 920 1530 990 1568 1050",
  "20 1065 45 1060 85 1128 130 1130 170 1157 205 1115 240 1075 265 940 290 850 325 770 352 728 370 790 395 960 420 1090 445 1190 465 1295 485 1310 505 1250 525 1110 550 1040 570 945 595 912 615 930 635 990 655 1015 685 968 720 960 735 920 755 913 785 940 805 1060 830 1155 865 1223 890 1190 915 1130 935 1070 965 960 990 925 1020 920 1040 965 1064 985",
]);

const veloSlow = toPoints(LOW, [
  "198 1128 230 1040 255 965 280 946 300 965 330 1060 355 1125 380 1142 405 1125 435 1040 470 945 500 921 530 950 560 1015 590 1045 615 1020 645 980 680 966 710 985 735 1050 765 1093 790 1060 830 990 860 940 885 928 910 960 940 1040 980 1130 1020 1175 1050 1150 1090 1050 1125 993 1155 995 1190 1055 1225 1077 1260 1050 1300 945 1335 890 1365 877 1390 905 1425 1030 1460 1140 1490 1175 1520 1140 1550 1020 1568 970",
  "20 955 45 975 75 1050 105 1085 130 1065 160 960 190 860 215 826 240 860 270 960 310 1060 355 1135 395 1140 420 1175 450 1192 470 1175 510 1070 550 970 585 940 620 950 665 1000 720 1024 770 1010 820 945 865 910 900 935 940 1045 975 1155 1005 1183 1035 1140 1075 1025 1110 995 1140 1010 1170 1080 1195 1097 1220 1050 1250 950 1278 930 1310 960 1345 1080 1380 1140 1405 1110 1430 1000 1465 905 1495 885 1525 905 1568 990",
  "35 1045 80 1075 130 1125 200 1148 240 1125 280 1030 320 890 355 790 380 757 405 790 440 980 480 1180 520 1278 550 1170 590 1030 610 960 638 937 665 965 695 995 740 960 785 928 820 980 860 1130 900 1200 940 1150 990 1010 1020 940 1042 932 1064 945",
]);

const stoc = toPoints(LOW, [
  "198 727 310 727 330 755 355 810 385 870 420 920 450 960 490 1050 520 1130 535 1200 560 1300 575 1311 660 1311 695 1285 740 1215 790 1110 812 1040 830 880 850 735 862 727 1075 727 1100 750 1140 805 1180 890 1210 970 1235 1090 1265 1230 1285 1300 1300 1311 1440 1311 1530 1300 1568 1308",
  "155 1311 177 1287 210 1190 236 1090 250 920 275 740 290 727 475 727 500 748 540 800 580 880 620 975 650 1050 680 1160 710 1290 720 1311 795 1311 825 1298 860 1255 930 1180 980 1110 1020 1010 1050 860 1080 755 1095 747 1140 780 1190 870 1230 910 1260 1060 1290 1250 1305 1305 1320 1311 1465 1311 1485 1295 1520 1220 1568 1165",
  "40 1060 70 970 100 850 130 740 145 727 225 727 245 760 270 815 310 890 360 930 400 965 445 1020 480 1065 530 1075 555 1108 580 1050 620 1020 655 1018 690 930 720 735 730 727 912 727 945 765 995 765 1020 830 1045 920 1064 1025",
]);

const DAYS = [331, 736, 1141, 1546];
const CYCLES = Array.from({ length: 18 }, (_, i) => 157.5 + 96 * i).filter((x) => x < 1800);
const ZERO = LOW + 1027 / 3;

const histogram = (() => {
  const pts = cci[0];
  let d = "";
  let i = 0;
  for (let x = 82; x <= 1714; x += 3) {
    while (i < pts.length - 2 && pts[i + 1][0] < x) i++;
    const [x0, y0] = pts[i], [x1, y1] = pts[i + 1];
    const y = y0 + ((y1 - y0) * (x - x0)) / (x1 - x0);
    d += `M${x + 0.5} ${y.toFixed(1)}V${ZERO.toFixed(1)}`;
  }
  return d;
})();

const SIGNALS = [
  { x: 182, label: "-1", ty: 361, down: 378, tri: [178, 404] },
  { x: 314, label: "1", ty: 401, up: 376, tri: [310, 364] },
  { x: 554, label: "-1", ty: 199, down: 215, tri: [550, 241] },
  { x: 740, label: "1", ty: 224, up: 200, tri: [735, 183] },
  { x: 904, label: "-1", ty: 188, down: 203, tri: [901, 225] },
  { x: 1001, label: "1", ty: 214, up: 190, tri: [996, 185] },
  { x: 1144, label: "-1", ty: 212, down: 227, tri: [1141, 254] },
  { x: 1310, label: "1", ty: 316, up: 292, tri: [1306, 282] },
  { x: 1357, label: "-1", ty: 303, down: 319, tri: [1353, 339] },
  { x: 1562, label: "1", ty: 314, up: 290, tri: [1557, 259] },
];

const Line = ({ pts, c, curve, ...rest }) => (
  <path d={(curve ? smooth : straight)(pts)} fill="none" stroke={c} shapeRendering="crispEdges" {...rest} />
);

const DayLines = ({ from, to }) => (
  <path
    d={DAYS.map((x) => `M${x + 0.5} ${from}V${to}`).join("")}
    stroke="#505050"
    strokeDasharray="9 3 3 3"
    shapeRendering="crispEdges"
  />
);

function MainPlot() {
  return (
    <Canvas viewBox="81 90 1759 467" preserveAspectRatio="none">
      <DayLines from={109} to={556} />
      <path d="M81 273.500H1836" stroke="#808000" strokeDasharray="4 3" shapeRendering="crispEdges" />
      <path d="M81 334.500H1350M1364 334.500H1714" stroke="#008080" shapeRendering="crispEdges" />
      <Line pts={price} c="#6464ff" />
      <Line pts={veloBlue} c="#0000ff" curve />
      <Line pts={veloRed} c="#ff0000" strokeDasharray="3 3" curve />
      <Line pts={velo} c="#008080" />
      <path d={squares(hiLow.green)} fill="#00ff00" shapeRendering="crispEdges" />
      <path d={squares(hiLow.red)} fill="#ff0000" shapeRendering="crispEdges" />
      <path
        d={bars.map(([x, y]) => `M${Math.round(x) - 2} ${Math.round(y) - 2}h4v4h-4z`).join("")}
        fill="#00ffff"
        shapeRendering="crispEdges"
      />
      {SIGNALS.map((s) => (
        <g key={s.x} fill={s.up ? "#00ff00" : "#ff0000"}>
          {s.up ? (
            <path d={`M${s.x} ${s.up}l4 6h-3v7h-2v-7h-3z`} />
          ) : (
            <path d={`M${s.x - 2} ${s.down}h4v9h3l-5 6l-5 -6h3z`} />
          )}
          <path d={`M${s.tri[0] - 2} ${s.tri[1] - 4}l5 4l-5 4z`} />
          <text x={s.x} y={s.ty + 5} fill="#fff" fontSize="16" textAnchor="middle">{s.label}</text>
        </g>
      ))}
      <text x="1744" y="269" fill="#808000" fontSize="20">23710.000</text>
    </Canvas>
  );
}

function LeoPlot() {
  return (
    <Canvas viewBox="81 557 1759 217" preserveAspectRatio="none">
      <DayLines from={575} to={771} />
      <g shapeRendering="crispEdges">
        <path d={CYCLES.map((x) => `M${x} 580V766`).join("")} stroke="#007070" strokeDasharray="18 6" />
        <path d="M81 606.500H1714M81 737.500H1714" stroke="#ff0000" />
        <path d="M81 639.500H1714M81 704.500H1714" stroke="#6a6a00" />
        <path d="M81 675.500H1714" stroke="#800080" />
        <path d="M81 671.500H1714" stroke="#0000ff" strokeDasharray="4 3" />
      </g>
      <Line pts={tealWave} c="#008080" curve />
      <Line pts={yellow} c="#ffff00" curve />
      <Line pts={yellowDash} c="#ffff00" strokeDasharray="3 4" curve />
      <Line pts={leo} c="#00ffff" />
      <path d="M1183 765L1838 635.500" stroke="#ff00ff" shapeRendering="crispEdges" />
    </Canvas>
  );
}

function CciPlot() {
  const upper = LOW + 868 / 3;
  const lower = LOW + 1186 / 3;
  return (
    <Canvas viewBox="81 774 1759 215" preserveAspectRatio="none">
      <defs>
        <clipPath id="hot"><rect x="81" y="774" width="1759" height={upper - 774} /></clipPath>
        <clipPath id="mid"><rect x="81" y={upper} width="1759" height={lower - upper} /></clipPath>
        <clipPath id="cold"><rect x="81" y={lower} width="1759" height="100" /></clipPath>
      </defs>
      <DayLines from={792} to={989} />
      <path d={histogram} stroke="#424242" shapeRendering="crispEdges" />
      <path d="M81 839.500H1714M81 945.500H1714" stroke="#808080" shapeRendering="crispEdges" />
      <path d="M81 892.500H1714" stroke="#008080" shapeRendering="crispEdges" />
      <g clipPath="url(#hot)"><Line pts={cci} c="#ff0000" /></g>
      <g clipPath="url(#mid)"><Line pts={cci} c="#a0a0a0" /></g>
      <g clipPath="url(#cold)"><Line pts={cci} c="#00ffff" /></g>
      <Line pts={veloSlow} c="#0000ff" curve />
      <g transform="translate(-4 0)"><Line pts={veloSlow} c="#ff0000" strokeDasharray="3 3" curve /></g>
      <Line pts={veloFast} c="#008080" />
      <Line pts={stoc} c="#c06000" strokeDasharray="4 3" />
      {[[133, 800], [448, 800], [844, 800], [1378, 802], [1660, 799]].map(([x, y]) => (
        <circle key={x} cx={x} cy={y} r="4" fill="#00ffff" />
      ))}
      {[[280, 982], [712, 979], [976, 983], [1246, 982]].map(([x, y]) => (
        <circle key={x} cx={x} cy={y} r="4" fill="#ff0000" />
      ))}
    </Canvas>
  );
}

function Scale({ marks, right, pad, last }) {
  return (
    <Axis $right={right} $pad={pad} $last={last}>
      {marks.map((m, i) => (
        <Mark key={i} $right={right}>{m}</Mark>
      ))}
    </Axis>
  );
}

const PRICES = Array.from({ length: 11 }, (_, i) => {
  const v = String(24100 - 100 * i);
  return v.slice(0, 2) + "," + v.slice(2);
});
const LEO_MARKS = ["10.00", "", "", "4.00", "", "", "-2.00", "", "", "-8.00", ""];
const CCI_MARKS = ["", "150.00", "", "50.00", "", "-50.00", "", "-150...."];
const CCI_MARKS_RIGHT = CCI_MARKS.map((m) => (m === "-150...." ? "-150.00" : m));

const TIMES = [
  ["13:32", 129], ["15:04", 198], ["16:36", 267], ["4/28", 338], ["10:40", 405], ["12:12", 474], ["13:44", 543],
  ["15:16", 612], ["16:48", 681], ["4/29", 743], ["10:52", 819], ["12:24", 888], ["13:56", 957], ["15:28", 1026],
  ["5/02", 1148], ["11:04", 1233], ["12:36", 1302], ["14:08", 1371], ["15:40", 1440], ["5/03", 1553], ["11:16", 1647],
  ["12:48", 1716], ["14:20", 1785], [null, 1920],
];
const timeColumns = TIMES.slice(0, -1).map(([, x], i) => `minmax(0, ${TIMES[i + 1][1] - x}fr)`).join(" ");

const TABS = [
  "STOX_TF60", "STOX_TF120", "STOX TF240", "STOX _100", "STOX_TF30", "FIB_TF60", "FIB_TF120", "FIB TF240", "FIB_100",
  "FIB_TF30", "BUND vs STOXX", "FIB Frame bassi", "FIB Giornaliero", "STOXX frame bassi", "STOXX giornaliero",
  "No PREZZI", "ANNUALE Indici",
];

const CYAN = "#00ffff";
const TEAL = "#008080";
const OLIVE = "#6a6a00";

export default function App() {
  return (
    <Page>
      <GlobalStyle />
      <TitleBar>
        <Logo viewBox="0 0 20 26">
          <path d="M6 5c3-3 9-2 11 3 1 4-2 9-5 11-1 2-1 4 1 5-3 0-4-2-3-5 3-4 4-9 1-11-3 0-4 3-3 6l-3 3C1 14 2 8 6 5z" fill="#1560d8" />
          <path d="M3 9c-2 4-2 11 3 14l2-3c-3-2-4-6-3-9z" fill="#0a2a9a" />
          <path d="M7 5c4-2 7 0 8 4" fill="none" stroke="#7ac4ff" strokeWidth="1.500" />
        </Logo>
        <TitleText>{"TradeStation 8.1 - STOX_FIB - FIB Giornaliero - [Chart Analysis - GS:FTSEMIB  4 min  [MCEDB] SPMIB FUTURES]"}</TitleText>
        <WindowButtons>
          <WindowButton $w={38} aria-label="Minimize">
            <svg width="18" height="20" viewBox="0 0 18 20"><path d="M1 13.500h16v4H1z" fill="#fff" stroke="#555" /></svg>
          </WindowButton>
          <WindowButton $w={36} aria-label="Restore">
            <svg width="20" height="18" viewBox="0 0 20 18">
              <path d="M5.500 1.500h13v11h-13z" fill="#fff" stroke="#445" />
              <path d="M1.500 4.500h13v12h-13z" fill="#fff" stroke="#445" />
              <path d="M5.500 8.500h5v4h-5z" fill="#6a89aa" stroke="#445" />
            </svg>
          </WindowButton>
          <WindowButton $w={63} $close aria-label="Close">
            <svg width="20" height="18" viewBox="0 0 20 18">
              <path d="M1.500 1.500h5L10 6l3.500-4.500h5L12.500 9l6 7.500h-5L10 12l-3.500 4.500h-5L7.500 9z" fill="#fff" stroke="#5a3a3a" />
            </svg>
          </WindowButton>
        </WindowButtons>
      </TitleBar>

      <MenuBar>
        <MenuIcon viewBox="0 0 20 18">
          <path d="M0 0h20v18H0z" fill="#000" />
          <path d="M0 0h20v2H0z" fill="#00c" />
          <path d="M2 11l2-4 2 3 3-5 2 3 3-4 1 4" fill="none" stroke="#0c0" />
          <path d="M1 13.500h18M15.500 3v10" stroke="#900" />
          <path d="M2 16l3-1 3 1 4-1 5 1" fill="none" stroke="#0a0" />
        </MenuIcon>
        {["File", "Edit", "View", "Insert", "Format", "Drawing", "Window", "Help"].map((m) => (
          <MenuItem key={m}>{m}</MenuItem>
        ))}
        <MdiButtons>
          <MdiButton aria-label="Minimize chart"><svg width="8" height="10"><path d="M1 8.500h6" stroke="#6a7d92" strokeWidth="2" /></svg></MdiButton>
          <MdiButton aria-label="Restore chart">
            <svg width="10" height="10" viewBox="0 0 10 10"><path d="M1 5h5v4H1zM3.500 4V1.500H9V6H7" fill="none" stroke="#6a7d92" strokeWidth="1.500" /></svg>
          </MdiButton>
          <MdiButton aria-label="Close chart">
            <svg width="8" height="8" viewBox="0 0 8 8"><path d="M1 1l6 6M7 1L1 7" stroke="#6a7d92" strokeWidth="2" /></svg>
          </MdiButton>
        </MdiButtons>
      </MenuBar>

      <ToolBar>
        <Grip />
        <Tools items={TOOL_GROUPS[0]} />
        <SymbolBox>
          <SymbolInput aria-label="Symbol" placeholder="Type a symbol/co" />
          <Arrow $w={18} aria-label="Symbol list"><Tri d="M0 2h8L4 7z" w={9} h={9} /></Arrow>
        </SymbolBox>
        <Arrow $w={18} $after={8} aria-label="Go"><Tri d="M2 0l4 4-4 4z" h={10} w={10} /></Arrow>
        <Tool aria-label="Find symbol"><Glyph viewBox="0 0 18 18">{ICONS.Find}</Glyph></Tool>
        <Grip $before={16} />
        <Tools items={TOOL_GROUPS[1]} />
        <Grip $before={26} />
        <Tools items={TOOL_GROUPS[2]} />
        <Tool $text aria-label="Text label">abc</Tool>
      </ToolBar>

      <Chart>
        <Pane $grow={467}>
          <Scale marks={PRICES} pad="11px 0 25px" />
          <Plot>
            <MainPlot />
            <Legend $tall>
              <Value $c="#6464ff" $after={8}>GS:FTSEMIB - 4 min</Value>
              <Value $c="#6464ff">MCEDB</Value>
              <Value $c="#fff">05/03/2022</Value>
              <Value $c="#00ff00">L=23660.000</Value>
              <Value $c="#fff">Hi=23855.000</Value>
              <Value $c="#fff">Lo=23595.000</Value>
              <Value $c="#00ff00">C=23660.000</Value>
              <Name>Close</Name>
              <Value $c={CYAN}>23660.000</Value>
              <Name>HILOW Alert</Name>
              <Value $c="#ff0000">23783.414</Value>
              <Name>Strategy</Name>
              <Name>Leo Velo Chart</Name>
              <Value $c={TEAL}>0.10</Value>
              <Value $c="#ff0000">0.10</Value>
              <Value $c="#0000ff">0.10</Value>
              <Value $c={TEAL}>0.00</Value>
            </Legend>
          </Plot>
          <Scale marks={PRICES} right pad="11px 0 25px" />
          <Badge $top={144} $bg="#ff0000">23,783</Badge>
          <Badge $top={193} $bg="#6464ff">23,660</Badge>
        </Pane>

        <Pane $grow={217}>
          <Scale marks={LEO_MARKS} pad="24px 0 11px" />
          <Plot>
            <LeoPlot />
            <Legend>
              <Name>Leo Chart</Name>
              <Value $c={CYAN}>-2.16</Value>
              <Value $c="#ff0000">8.00</Value>
              <Value $c="#ff0000">-8.00</Value>
              <Value $c={OLIVE}>4.00</Value>
              <Value $c={OLIVE}>-4.00</Value>
              <Value $c="#0000ff">0.00</Value>
              <Name $after={38}>Macd ciclico 2</Name>
              <Value $c="#800080">0.00</Value>
            </Legend>
          </Plot>
          <Scale marks={LEO_MARKS} right pad="24px 0 11px" />
          <Badge $top={40} $bg="#ff0000">8.00</Badge>
          <Badge $top={73} $bg={OLIVE}>4.00</Badge>
          <Badge $top={105} $bg="#0000ff">0.00</Badge>
          <Badge $top={138} $bg={OLIVE}>-4.00</Badge>
          <Badge $top={123} $bg={CYAN}>-2.16</Badge>
          <Badge $top={171} $bg="#ff0000">-8.00</Badge>
        </Pane>

        <Pane $grow={215}>
          <Scale marks={CCI_MARKS} pad="19px 0 20px" last />
          <Plot>
            <CciPlot />
            <Legend>
              <Name $after={12}>CCI Smothing ekam</Name>
              <Value $c="#a0a0a0">18.49</Value>
              <Value $c="#808080">120.00</Value>
              <Value $c="#808080">-120.00</Value>
              <Value $c="#404040">18.49</Value>
              <Name>Leo Velo Chart</Name>
              <Value $c={TEAL}>0.15</Value>
              <Value $c="#ff0000">0.46</Value>
              <Value $c="#0000ff">0.52</Value>
              <Value $c={TEAL}>0.00</Value>
              <Name $after={28}>Stoc colore</Name>
              <Value $c="#c06000">-0.01</Value>
            </Legend>
          </Plot>
          <Scale marks={CCI_MARKS_RIGHT} right pad="19px 0 20px" last />
          <Badge $top={56} $bg="#808080">120.00</Badge>
          <Badge $top={101} $bg="#a0a0a0">18.49</Badge>
          <Badge $top={162} $bg="#808080">-120.00</Badge>
        </Pane>

        <TimeAxis style={{ gridTemplateColumns: timeColumns }}>
          <TimeTicks viewBox="1 0 1919 11" preserveAspectRatio="none">
            <path d={Array.from({ length: 25 }, (_, i) => `M${127.5 + 69 * i} 0v4`).join("")} stroke="#f00" />
            <path d={DAYS.map((x) => `M${x + 0.5} 0v10`).join("")} stroke="#f00" />
          </TimeTicks>
          {TIMES.slice(0, -1).map(([t, x]) => (
            <span key={x}>{t}</span>
          ))}
        </TimeAxis>
      </Chart>

      <ScrollBar>
        <Arrow $w={16} aria-label="Scroll left"><Tri d="M6 0v8L1 4z" c="#333" /></Arrow>
        <Track />
        <Thumb aria-label="Scroll position" />
        <Arrow $w={22} aria-label="Scroll right"><Tri d="M2 0v8l5-4z" c="#333" /></Arrow>
      </ScrollBar>

      <TabBar>
        <TabNav aria-label="First tab"><Tri d="M0 0h1v8H0zM7 0v8L2 4z" c="#555" /></TabNav>
        <TabNav aria-label="Previous tab"><Tri d="M6 0v8L2 4z" c="#555" /></TabNav>
        <TabNav aria-label="Next tab"><Tri d="M2 0v8l4-4z" c="#555" /></TabNav>
        <TabNav aria-label="Last tab"><Tri d="M7 0h1v8H7zM1 0v8l5-4z" c="#555" /></TabNav>
        <Slant viewBox="0 0 6 16"><path d="M.5 0L5.500 16" stroke="#111" /></Slant>
        {TABS.map((t, i) => (
          <React.Fragment key={t}>
            <Tab $on={t === "FIB Giornaliero"}>{t}</Tab>
            <Slant viewBox="0 0 6 16">
              {i === TABS.length - 1 ? (
                <path d="M5.500 0L.5 16" stroke="#111" />
              ) : (
                <path d="M.5 0L5.500 16M3 8.500L.5 16" stroke="#111" fill="none" />
              )}
            </Slant>
          </React.Fragment>
        ))}
      </TabBar>

      <StatusBar>
        <span>For Help, press F1</span>
        <Spacer />
        <Cell $first>Acct:</Cell>
        <Cell>Open Psns:</Cell>
        <Cell>DT BP:</Cell>
        <Cell>Purch Pwr:</Cell>
        <Cell $r={16}>Closed P/L:</Cell>
        <Cell $r={16}>RT TE:</Cell>
        <Cell>Open P/L:</Cell>
        <Cell $c="#1a8a1a" $r={8}>ORDER BAR</Cell>
        <Cell $c="#1a8a1a" $r={4}>MACROS</Cell>
        <Cell $r={4}>
          <svg width="12" height="12" viewBox="0 0 12 12"><circle cx="6" cy="6" r="5" fill="#c00" stroke="#400" /><circle cx="4.500" cy="4" r="1.500" fill="#f99" /></svg>
        </Cell>
        <Cell $r={0}>03/05/2022 12:45</Cell>
      </StatusBar>
    </Page>
  );
}
